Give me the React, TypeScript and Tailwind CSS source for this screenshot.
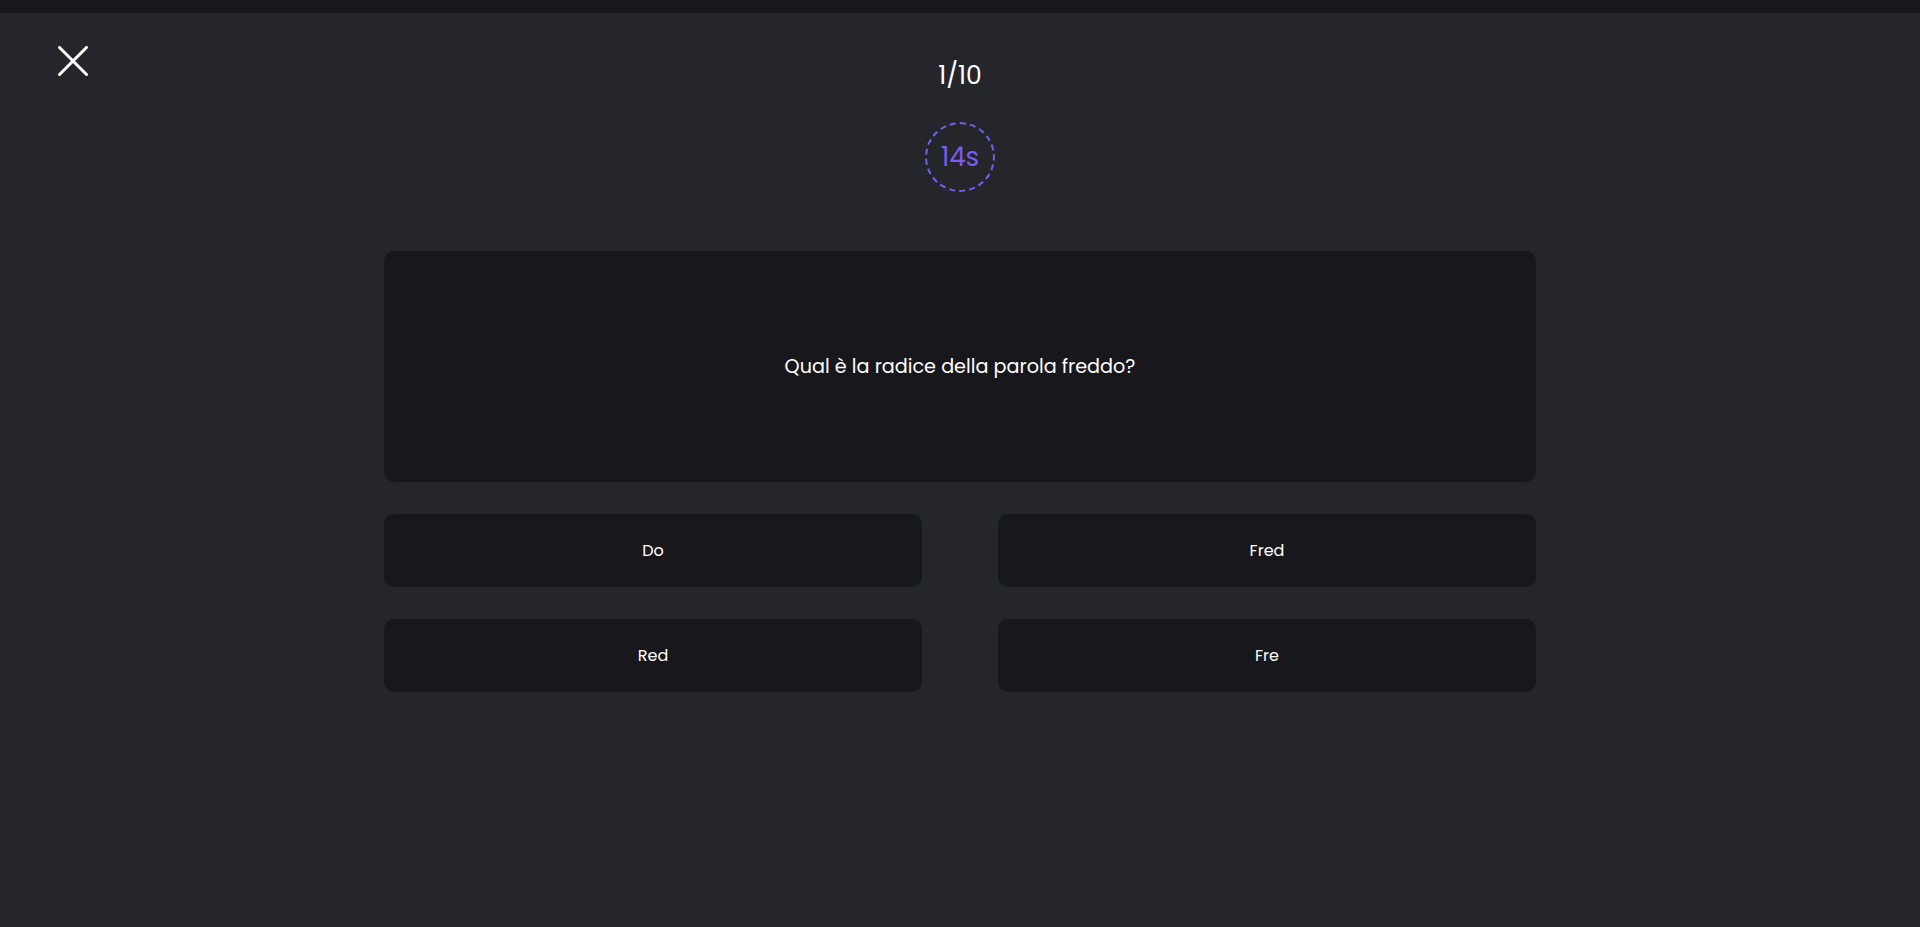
import React from "react";

export default function App() {
  const answers = ["Do", "Fred", "Red", "Fre"];
  return (
    <div className="min-h-screen w-full bg-[#25262b] font-['Poppins','Open_Sans',sans-serif] text-white">
      <div className="h-[13px] w-full bg-[#18181c]" />
      <div className="grid grid-cols-[1fr_auto_1fr] items-start pt-[33px]">
        <div className="pl-[58px]">
          <button className="block h-[30px] w-[30px]" aria-label="close">
            <svg width="30" height="30" viewBox="0 0 30 30" fill="none">
              <path d="M1.5 1.5 L28.5 28.5 M28.5 1.5 L1.5 28.5" stroke="white" strokeWidth="3" strokeLinecap="square" />
            </svg>
          </button>
        </div>
        <div className="mt-[12px] text-[25px] leading-[36px] text-white">1/10</div>
        <div />
      </div>
      <div className="mt-[28px] flex justify-center">
        <div className="flex h-[70px] w-[70px] items-center justify-center rounded-full border-2 border-dashed border-[#7b5cf0] pt-[1px] text-[26px] text-[#7b5cf0]">
          14s
        </div>
      </div>
      <div className="mx-auto mt-[59px] w-[1152px]">
        <div className="flex h-[231px] items-center justify-center rounded-[10px] bg-[#18181c] pt-[2px] text-[19.2px] text-white">
          Qual è la radice della parola freddo?
        </div>
        <div className="mt-[32px] grid grid-cols-2 gap-x-[76px] gap-y-[32px]">
          {answers.map((a) => (
            <button
              key={a}
              className="flex h-[73px] items-center justify-center rounded-[10px] bg-[#18181c] text-[16px] text-white"
            >
              {a}
            </button>
          ))}
        </div>
      </div>
    </div>
  );
}
